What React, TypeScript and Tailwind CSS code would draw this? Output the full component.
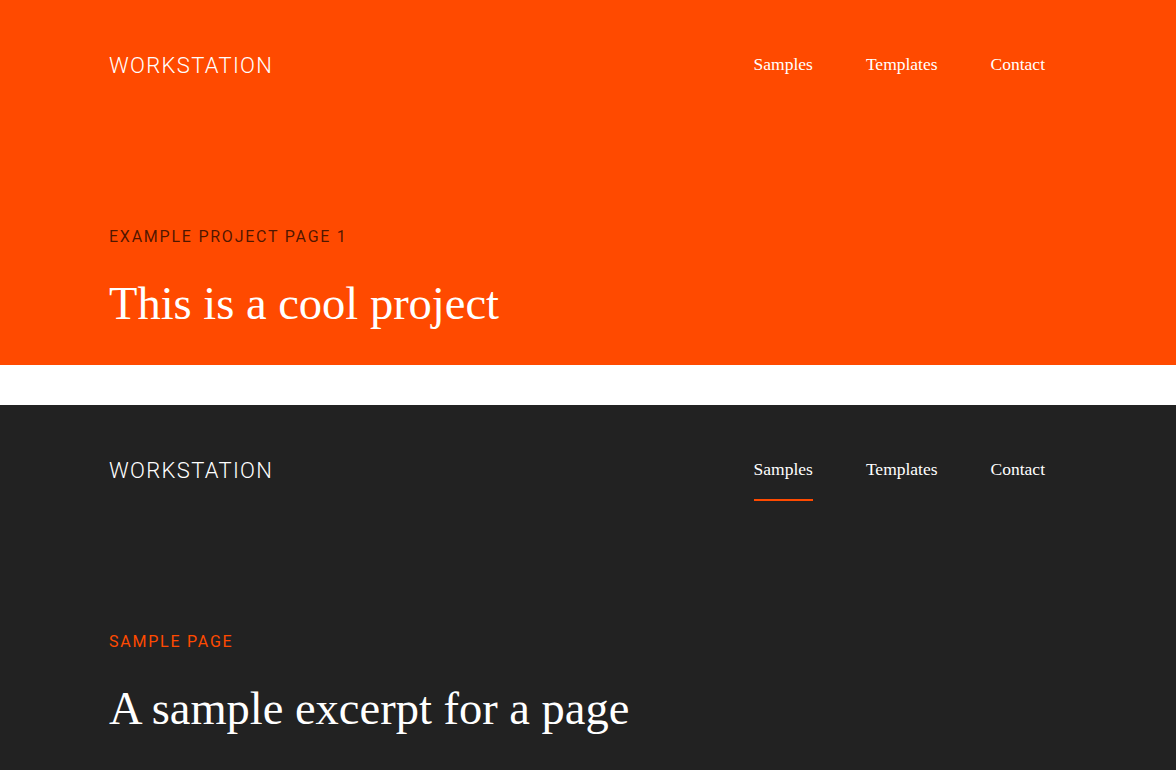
const navItems = ["Samples", "Templates", "Contact"];

const Hero: React.FC<{
   dark?: boolean;
   label: string;
   title: string;
   active?: string;
}> = ({ dark, label, title, active }) => {
   return (
      <section className={`h-[365px] pl-[109px] pr-[131px] ${dark ? "bg-[#222222]" : "bg-[#ff4a00]"}`}>
         <header className="h-[130px] flex flex-row items-center justify-between">
            <div className="text-[22px] leading-none tracking-[0.06em] font-light text-white [font-family:Roboto,sans-serif] mt-[1px]">
               WORKSTATION
            </div>
            <nav className="flex flex-row gap-[53px] text-[17.5px] leading-none text-white [font-family:'Liberation_Serif',serif] -mt-[1px]">
               {navItems.map((item) => (
                  <a key={item} className="relative cursor-pointer">
                     {item}
                     {active === item && <span className="absolute left-0 right-0 top-[38px] h-[2px] bg-[#ff4a00]"></span>}
                  </a>
               ))}
            </nav>
         </header>
         <div
            className={`mt-[97px] text-[16px] leading-[20px] tracking-[0.11em] [font-family:Roboto,sans-serif] ${
               dark ? "text-[#ff4a00]" : "text-black/70"
            }`}
         >
            {label}
         </div>
         <h1 className="mt-[29px] text-[46.5px] leading-[56px] text-white [font-family:'Liberation_Serif',serif]">{title}</h1>
      </section>
   );
};

export default function App() {
   return (
      <div className="w-full min-h-screen bg-white">
         <Hero label="EXAMPLE PROJECT PAGE 1" title="This is a cool project" />
         <div className="h-[40px]"></div>
         <Hero dark label="SAMPLE PAGE" title="A sample excerpt for a page" active="Samples" />
      </div>
   );
}
